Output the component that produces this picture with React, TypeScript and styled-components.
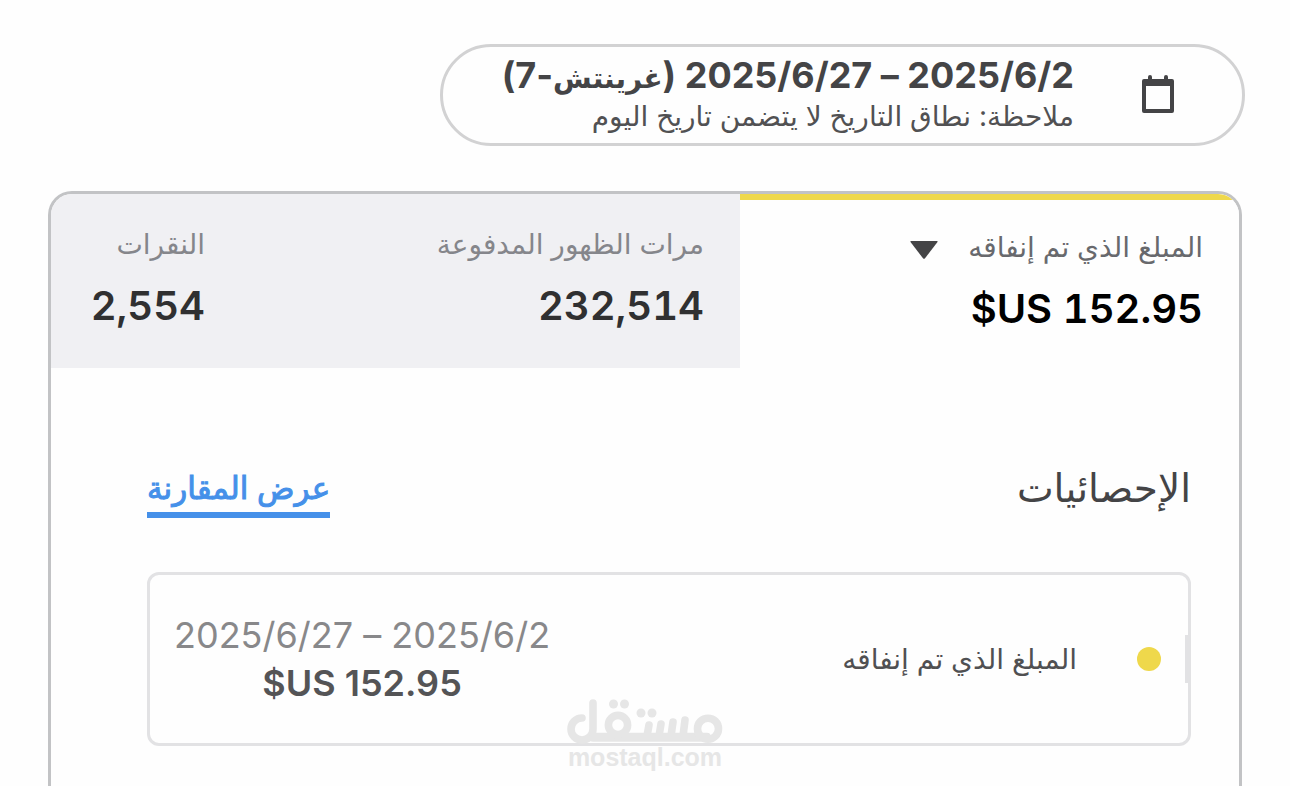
import React from 'react';
import styled, { createGlobalStyle } from 'styled-components';

const GlobalStyle = createGlobalStyle`
  * { box-sizing: border-box; }
  body {
    margin: 0;
    background: #fefefe;
    color: #444446;
    font-family: Inter, "DejaVu Sans", sans-serif;
  }
  button {
    border: 0;
    background: none;
    color: inherit;
    font: inherit;
    text-align: start;
    cursor: pointer;
  }
  h2, p { margin: 0; }
`;

const Page = styled.div`
  position: relative;
  display: flex;
  flex-direction: column;
  gap: 45px;
  min-height: 100vh;
  padding-top: 44px;
`;

const DateButton = styled.button`
  display: flex;
  align-items: center;
  gap: 68px;
  width: calc(100% - 90px);
  max-width: 805px;
  height: 102px;
  margin-inline-start: 45px;
  padding: 0 68px 2px 60px;
  border: 3px solid #d2d2d3;
  border-radius: 51px;
  white-space: nowrap;
`;

const CalendarIcon = styled.svg`
  flex: none;
  width: 32px;
  height: 38px;
`;

const DateText = styled.span`
  display: flex;
  flex-direction: column;
`;

const DateRange = styled.strong`
  font-size: 36px;
  line-height: 40px;
  font-weight: 700;
`;

const ZoneName = styled.span`
  font-size: 28px;
`;

const DateNote = styled.span`
  font-size: 28px;
  line-height: 36px;
  color: #515153;
`;

const Card = styled.main`
  flex: 1;
  margin: 0 48px;
  border: 3px solid #c2c3c5;
  border-bottom: 0;
  border-radius: 24px 24px 0 0;
  overflow: hidden;
`;

const Tabs = styled.div`
  display: flex;
  overflow: hidden;
  background: #f0f0f3;
`;

const Tab = styled.button<{ $active?: boolean }>`
  display: flex;
  flex: 0 0 499px;
  flex-direction: column;
  align-items: flex-start;
  gap: 4px;
  height: 174px;
  padding: 26px 36px 0;
  color: #303031;
  ${({ $active }) =>
    $active &&
    `
    border-top: 6px solid #efd84b;
    padding-top: 23px;
    background: #fefefe;
    color: #000;
  `}
`;

const TabLabel = styled.span<{ $active?: boolean }>`
  display: flex;
  align-items: center;
  gap: 30px;
  font-size: 28px;
  line-height: 48px;
  color: ${({ $active }) => ($active ? '#68696d' : '#85868b')};
`;

const Caret = styled.svg`
  width: 28px;
  height: 24px;
`;

const TabValue = styled.bdi`
  font-size: 40px;
  line-height: 68px;
  font-weight: 600;
  font-variant-numeric: tabular-nums;
`;

const Stats = styled.section`
  padding: 96px 48px 40px 96px;
`;

const StatsHeader = styled.header`
  display: flex;
  justify-content: space-between;
  align-items: flex-start;
  margin-bottom: 54px;
`;

const StatsTitle = styled.h2`
  font-size: 39px;
  line-height: 48px;
  font-weight: 400;
`;

const CompareLink = styled.a`
  border-bottom: 6px solid #4590e9;
  color: #4590e9;
  font-size: 31px;
  line-height: 48px;
  -webkit-text-stroke: 1px currentColor;
  text-decoration: none;
`;

const StatRow = styled.div`
  position: relative;
  display: flex;
  align-items: center;
  height: 174px;
  padding: 0 27px 0 24px;
  border: 3px solid #e2e2e4;
  border-radius: 12px;

  &::before {
    content: '';
    position: absolute;
    inset-inline-start: -3px;
    width: 6px;
    height: 48px;
    background: #e2e2e4;
  }
`;

const Dot = styled.span`
  width: 24px;
  height: 24px;
  margin-inline-end: 60px;
  border-radius: 50%;
  background: #efd84b;
`;

const StatName = styled.span`
  flex: 1;
  font-size: 28px;
  line-height: 48px;
  color: #505052;
`;

const StatFigures = styled.div`
  display: flex;
  flex-direction: column;
  align-items: center;
`;

const StatRange = styled.span`
  font-size: 36px;
  line-height: 48px;
  color: #88888a;
`;

const StatValue = styled.bdi`
  font-size: 36px;
  line-height: 48px;
  font-weight: 600;
  color: #545456;
`;

const Watermark = styled.div`
  position: absolute;
  inset-inline: 0;
  bottom: 16px;
  display: flex;
  flex-direction: column;
  align-items: center;
  color: #e6e6e6;
  font-family: "Liberation Sans", sans-serif;
  font-size: 25px;
  line-height: 26px;
  font-weight: 700;
  pointer-events: none;
`;

const WatermarkLogo = styled.svg`
  width: 156px;
  height: 46px;
`;

const metrics = [
  { label: 'المبلغ الذي تم إنفاقه', value: '$US 152.95', active: true },
  { label: 'مرات الظهور المدفوعة', value: '232,514', active: false },
  { label: 'النقرات', value: '2,554', active: false },
];

export default function App() {
  return (
    <Page dir="rtl" lang="ar">
      <GlobalStyle />
      <DateButton type="button">
        <CalendarIcon viewBox="0 0 32 38" aria-hidden="true">
          <path
            fill="#444446"
            fillRule="evenodd"
            d="M6 2a2 2 0 0 1 4 0v2h12V2a2 2 0 0 1 4 0v2h4a2 2 0 0 1 2 2v30a2 2 0 0 1-2 2H2a2 2 0 0 1-2-2V6a2 2 0 0 1 2-2h4zM4 11v23h24V11z"
          />
        </CalendarIcon>
        <DateText>
          <DateRange>
            2025/6/2 – 2025/6/27 (<ZoneName>غرينتش</ZoneName>-7)
          </DateRange>
          <DateNote>ملاحظة: نطاق التاريخ لا يتضمن تاريخ اليوم</DateNote>
        </DateText>
      </DateButton>

      <Card>
        <Tabs role="tablist">
          {metrics.map(({ label, value, active }) => (
            <Tab key={label} type="button" role="tab" aria-selected={active} $active={active}>
              <TabLabel $active={active}>
                {label}
                {active && (
                  <Caret viewBox="0 -6 28 24" aria-hidden="true">
                    <path d="M1 0h26q1 0 .5 1L15 17.3q-1 1-2 0L.5 1Q0 0 1 0z" fill="#444446" />
                  </Caret>
                )}
              </TabLabel>
              <TabValue dir="ltr">{value}</TabValue>
            </Tab>
          ))}
        </Tabs>

        <Stats>
          <StatsHeader>
            <StatsTitle>الإحصائيات</StatsTitle>
            <CompareLink href="#compare">عرض المقارنة</CompareLink>
          </StatsHeader>
          <StatRow>
            <Dot />
            <StatName>المبلغ الذي تم إنفاقه</StatName>
            <StatFigures>
              <StatRange>2025/6/2 – 2025/6/27</StatRange>
              <StatValue dir="ltr">$US 152.95</StatValue>
            </StatFigures>
          </StatRow>
        </Stats>
      </Card>

      <Watermark dir="ltr">
        <WatermarkLogo viewBox="0 0 156 46" role="img" aria-label="مستقل">
          <g fill="none" stroke="#e6e6e6" strokeWidth="7.6" strokeLinecap="round">
            <path d="M15 20A11 11 0 1 0 26 31V5" />
            <path d="M26 38.5H140M80 38l2-11M92 38l2-12M104 38l2-14M116 38l2-16" />
            <path d="M26 40H140" />
            <circle cx="51" cy="27" r="9.6" />
            <circle cx="141" cy="30.7" r="10.5" />
          </g>
          <g fill="#e6e6e6">
            <circle cx="46.5" cy="6" r="4.5" />
            <circle cx="57.5" cy="6" r="4.5" />
            <circle cx="74" cy="15" r="4.5" />
            <circle cx="85" cy="15" r="4.5" />
          </g>
        </WatermarkLogo>
        mostaql.com
      </Watermark>
    </Page>
  );
}
